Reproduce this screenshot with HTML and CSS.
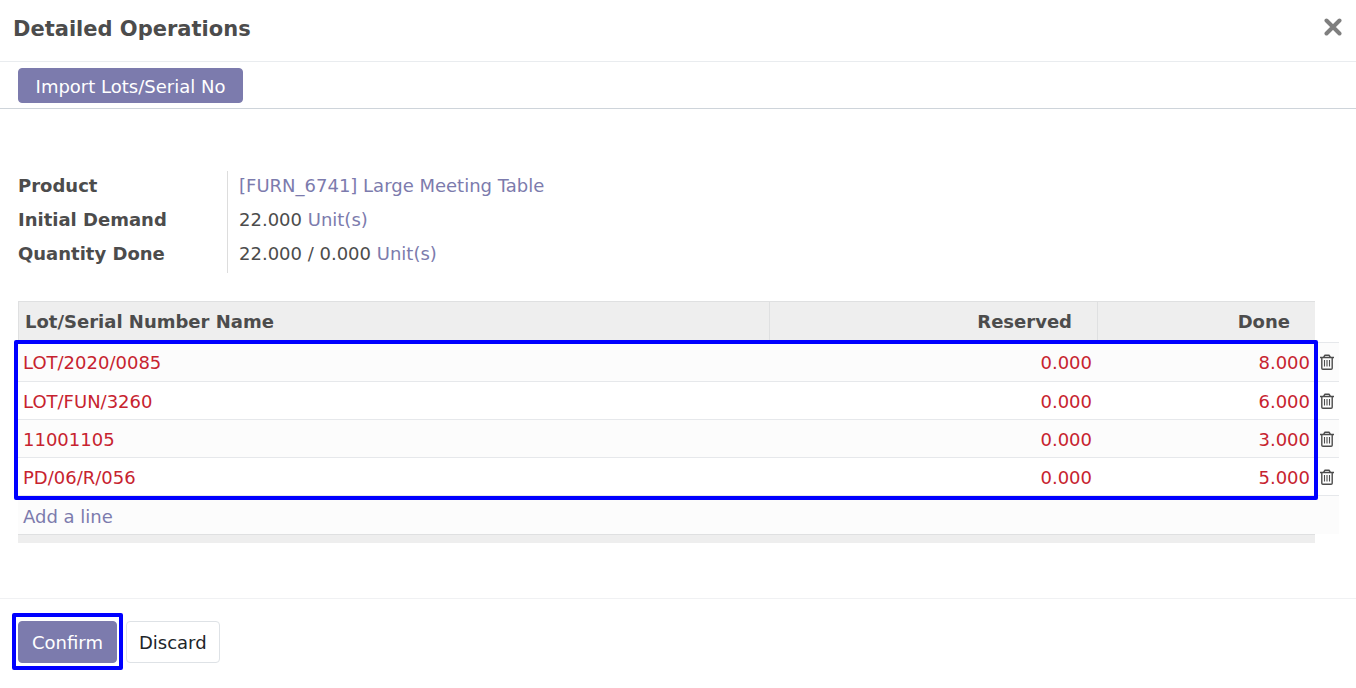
FILE: index.html
```html
<!DOCTYPE html>
<html lang="en">
<head>
<meta charset="utf-8">
<meta name="viewport" content="width=device-width, initial-scale=1">
<title>Detailed Operations</title>
<link rel="stylesheet" href="styles.css">
</head>
<body>
<svg class="sprite" aria-hidden="true">
  <symbol id="trash" viewBox="0 0 14 16">
    <path d="M0 3.5H14M4 3.5V2.5L5 1.3H9L10 2.5V3.5M1.8 3.5V14.2Q1.8 15.3 2.9 15.3H11.1Q12.2 15.3 12.2 14.2V3.5" fill="none" stroke="currentColor" stroke-width="1.4"/>
    <path d="M4.5 6V12.6M7 6V12.6M9.5 6V12.6" fill="none" stroke="currentColor" stroke-width="1.1"/>
  </symbol>
</svg>
<main class="dialog">
  <header class="dialog-header">
    <h1 class="dialog-title">Detailed Operations</h1>
    <button class="close" type="button" aria-label="Close">
      <svg class="close-icon" viewBox="0 0 18 18" aria-hidden="true"><path d="M2.5 2.5L15.5 15.5M15.5 2.5L2.5 15.5" stroke="currentColor" stroke-width="4" stroke-linecap="round" fill="none"/></svg>
    </button>
  </header>
  <div class="toolbar">
    <button class="btn btn-primary btn-compact" type="button">Import Lots/Serial No</button>
  </div>
  <div class="dialog-body">
    <dl class="group">
      <dt>Product</dt>
      <dd><a href="#">[FURN_6741] Large Meeting Table</a></dd>
      <dt>Initial Demand</dt>
      <dd>22.000 <a href="#">Unit(s)</a></dd>
      <dt>Quantity Done</dt>
      <dd>22.000 / 0.000 <a href="#">Unit(s)</a></dd>
    </dl>
    <div class="lines-wrap">
      <table class="lines">
        <colgroup><col class="col-name"><col class="col-reserved"><col class="col-done"><col class="col-action"></colgroup>
        <thead>
          <tr><th scope="col">Lot/Serial Number Name</th><th scope="col" class="num">Reserved</th><th scope="col" class="num">Done</th><td class="blank"></td></tr>
        </thead>
        <tbody>
          <tr><td>LOT/2020/0085</td><td class="num">0.000</td><td class="num">8.000</td><td class="action"><button class="delete" type="button" aria-label="Delete LOT/2020/0085"><svg class="trash"><use href="#trash"/></svg></button></td></tr>
          <tr><td>LOT/FUN/3260</td><td class="num">0.000</td><td class="num">6.000</td><td class="action"><button class="delete" type="button" aria-label="Delete LOT/FUN/3260"><svg class="trash"><use href="#trash"/></svg></button></td></tr>
          <tr><td>11001105</td><td class="num">0.000</td><td class="num">3.000</td><td class="action"><button class="delete" type="button" aria-label="Delete 11001105"><svg class="trash"><use href="#trash"/></svg></button></td></tr>
          <tr><td>PD/06/R/056</td><td class="num">0.000</td><td class="num">5.000</td><td class="action"><button class="delete" type="button" aria-label="Delete PD/06/R/056"><svg class="trash"><use href="#trash"/></svg></button></td></tr>
          <tr><td colspan="4"><a href="#">Add a line</a></td></tr>
        </tbody>
        <tfoot>
          <tr><td colspan="3"></td><td class="blank"></td></tr>
        </tfoot>
      </table>
    </div>
  </div>
  <footer class="dialog-footer">
    <div class="confirm-wrap"><button class="btn btn-primary" type="button">Confirm</button></div>
    <button class="btn btn-secondary" type="button">Discard</button>
  </footer>
</main>
</body>
</html>
```
FILE: styles.css
```css
* { box-sizing: border-box; }

body {
  margin: 0;
  background: #fff;
  color: #4c4c4c;
  font: 18px/24px "DejaVu Sans", Verdana, sans-serif;
}

a { color: #7c7bad; text-decoration: none; }

.sprite { display: none; }

.dialog-header {
  display: flex;
  align-items: flex-start;
  justify-content: space-between;
  padding: 13px 14px 16px 13px;
  border-bottom: 1px solid #e9ecef;
}

.dialog-title {
  margin: 0;
  font-size: 21px;
  line-height: 32px;
}

.close {
  display: flex;
  padding: 5px 0;
  border: 0;
  background: none;
  color: #7f7f7f;
}

.close-icon { width: 18px; height: 18px; }

.toolbar {
  padding: 6px 18px 5px;
  border-bottom: 1px solid #ced4da;
}

.btn {
  display: block;
  padding: 9px 13px 7px;
  border: 1px solid transparent;
  border-radius: 4px;
  font: inherit;
}

.btn-compact {
  min-width: 225px;
  padding-top: 6px;
  padding-bottom: 3px;
}

.btn-primary {
  border-color: #7c7bad;
  background: #7c7bad;
  color: #fff;
}

.btn-secondary {
  padding-right: 12px;
  padding-left: 12px;
  border-color: #dee2e6;
  background: #fff;
  color: #212529;
}

.dialog-body { padding: 62px 17px 55px 18px; }

.group {
  display: grid;
  grid-template-columns: 210px 1fr;
  margin: 0 0 28px;
}

.group dt {
  padding: 3px 0 7px;
  border-right: 1px solid #ddd;
  font-weight: bold;
}

.group dd {
  margin: 0;
  padding: 3px 11px 7px;
}

.lines-wrap { position: relative; }

/* Frame around the entered lot rows */
.lines-wrap::after {
  content: "";
  position: absolute;
  top: 39px;
  right: 21px;
  bottom: 43px;
  left: -4px;
  border: 4px solid #00f;
  border-radius: 2px;
  pointer-events: none;
}

.lines {
  width: 100%;
  border-spacing: 0;
  table-layout: fixed;
}

.col-reserved { width: 328px; }
.col-done { width: 218px; }
.col-action { width: 24px; }

.lines th {
  padding: 8px 25px 8px 6px;
  border-top: 1px solid #dfe0e1;
  border-left: 1px solid #dfe0e1;
  background: #eee;
  text-align: left;
}

.lines .num { text-align: right; }

.lines tbody td {
  padding: 8px 5px 5px;
  border-top: 1px solid #e6e8eb;
  color: #c7232f;
}

.lines tbody tr:first-child td { padding-bottom: 6px; }
.lines tbody tr:last-child td { padding: 9px 5px 5px; }
.lines tbody tr:nth-child(odd) { background: #fcfcfc; }

.lines tbody tr .action,
.lines tbody tr:first-child .action {
  padding: 0 5px;
  color: #4c4c4c;
}

.delete {
  display: block;
  padding: 0;
  border: 0;
  background: none;
  color: inherit;
}

.trash { display: block; width: 14px; height: 16px; }

.lines tfoot td {
  height: 9px;
  padding: 0;
  border-top: 1px solid #dfe0e1;
  background: #eee;
}

.lines .blank, .lines tfoot .blank {
  padding: 0;
  border: 0;
  background: none;
}

.dialog-footer {
  display: flex;
  gap: 3px;
  align-items: center;
  padding: 14px 12px;
  border-top: 1px solid #f0f1f3;
}

/* Frame around the confirm action */
.confirm-wrap {
  padding: 4px 2px 3px;
  border: 4px solid #00f;
  border-radius: 2px;
}
```
